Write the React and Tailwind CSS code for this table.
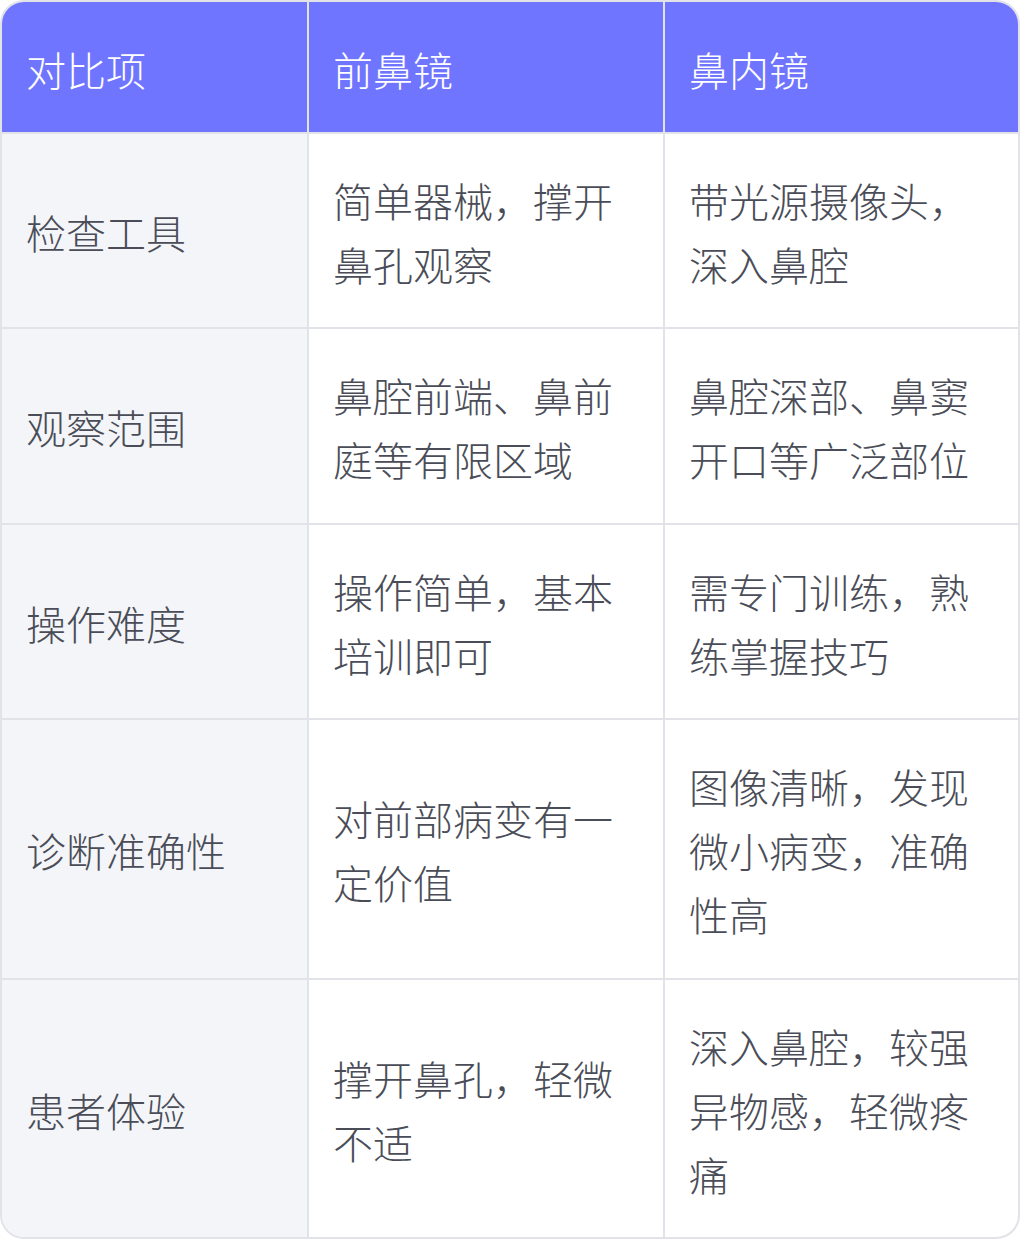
const rows = [
  ["检查工具", "简单器械，撑开鼻孔观察", "带光源摄像头，深入鼻腔"],
  ["观察范围", "鼻腔前端、鼻前庭等有限区域", "鼻腔深部、鼻窦开口等广泛部位"],
  ["操作难度", "操作简单，基本培训即可", "需专门训练，熟练掌握技巧"],
  ["诊断准确性", "对前部病变有一定价值", "图像清晰，发现微小病变，准确性高"],
  ["患者体验", "撑开鼻孔，轻微不适", "深入鼻腔，较强异物感，轻微疼痛"],
];

export default function App() {
  return (
    <div className="w-[1020px] bg-white font-['Noto_Sans_CJK_SC',sans-serif] font-light">
      <div className="rounded-3xl border-2 border-[#e2e3e8] overflow-hidden">
        <table className="w-full table-fixed border-collapse text-[40px] leading-[64px]">
          <colgroup>
            <col className="w-[306px]" />
            <col className="w-[356px]" />
            <col />
          </colgroup>
          <thead>
            <tr className="bg-[#7075ff] text-white">
              <th className="text-left font-light px-6 pt-[34.5px] pb-[31px] border-r-2 border-[#e2e3e8]">对比项</th>
              <th className="text-left font-light px-6 pt-[34.5px] pb-[31px] border-r-2 border-[#e2e3e8]">前鼻镜</th>
              <th className="text-left font-light px-6 pt-[34.5px] pb-[31px]">鼻内镜</th>
            </tr>
          </thead>
          <tbody className="text-[#4a4d57]">
            {rows.map((r) => (
              <tr key={r[0]} className="border-t-2 border-[#e2e3e8]">
                <td className="bg-[#f4f5f9] px-6 pt-[34px] pb-[31.5px] align-middle border-r-2 border-[#e2e3e8]">{r[0]}</td>
                <td className="px-6 pt-[34px] pb-[31.5px] align-middle border-r-2 border-[#e2e3e8]">{r[1]}</td>
                <td className="px-6 pt-[34px] pb-[31.5px] align-middle">{r[2]}</td>
              </tr>
            ))}
          </tbody>
        </table>
      </div>
    </div>
  );
}
